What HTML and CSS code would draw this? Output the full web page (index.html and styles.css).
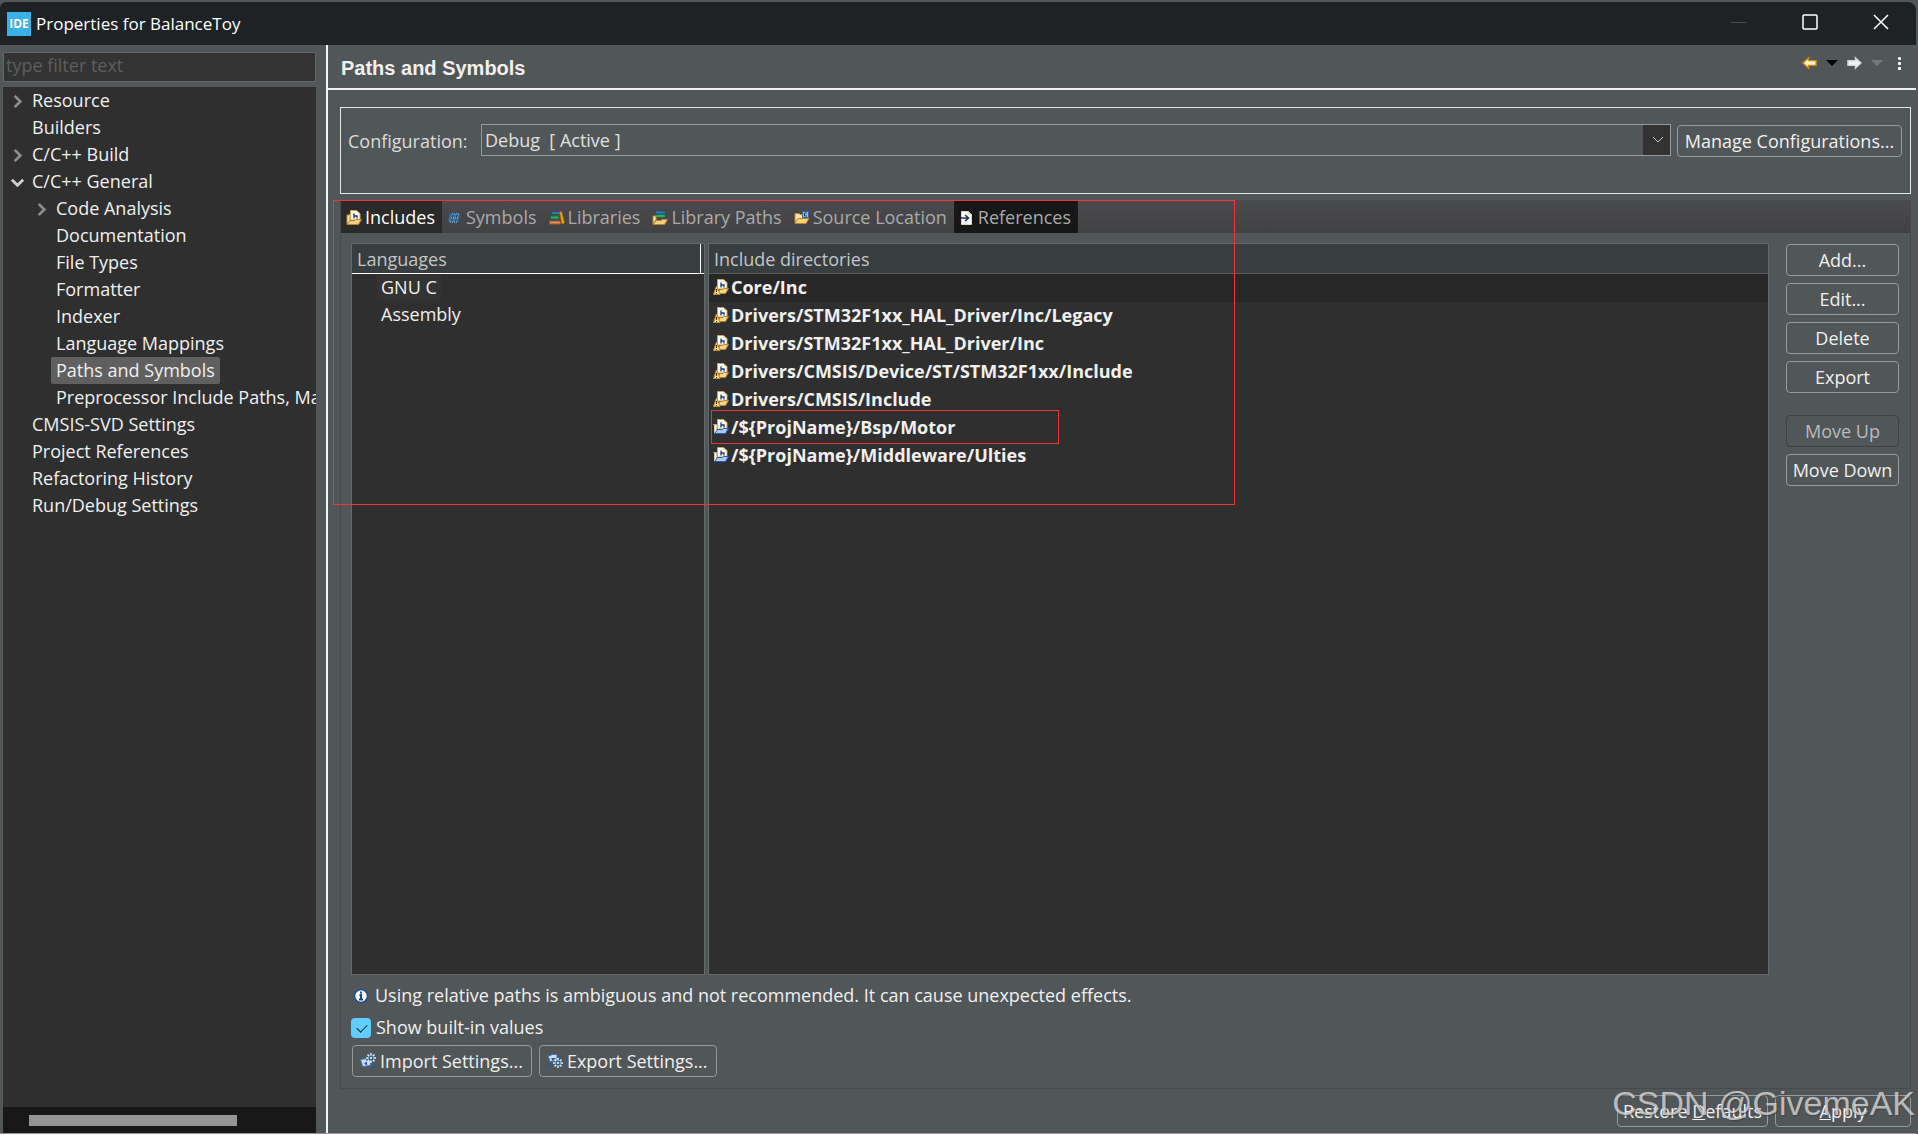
FILE: index.html
```html
<!DOCTYPE html>
<html lang="en">
<head>
  <meta charset="UTF-8" />
  <meta name="viewport" content="width=device-width, initial-scale=1.0"/>
  <title>Properties for BalanceToy</title>
  <link rel="stylesheet" href="styles.css">
</head>
<body>
  <svg class="defs" aria-hidden="true">
    <symbol id="chevron" viewBox="0 0 16 16"><path d="M5 2l6 6-6 6" fill="none" stroke="currentColor" stroke-width="3"/></symbol>
    <symbol id="header-page" viewBox="0 0 16 16">
      <path d="M4.500 10V.500h6l3.500 3V10z" fill="#fffaf0" stroke="#c9a55a"/>
      <path d="M8 3.500v5M8 6h3v2.500" fill="none" stroke="#1b3c6e" stroke-width="1.300"/>
    </symbol>
    <symbol id="folder-h" viewBox="0 0 16 16">
      <path d="M1 14V5h2l1-1v8z" fill="#fbe3a4" stroke="#b98a35"/>
      <use href="#header-page"/>
      <path d="M1 14.500l3-4h5l1-1h5.500l-3 5z" fill="#f7cf7f" stroke="#b9822c"/>
    </symbol>
    <symbol id="folder-warn" viewBox="0 0 16 16">
      <use href="#header-page"/>
      <path d="M5 14.500l2-4h3l1-1h4.500l-3 5z" fill="#f9d58c" stroke="#b9822c"/>
      <path d="M3.500 7l3.500 8.500H.500z" fill="#ffe08a" stroke="#d08a1c"/>
      <path d="M3.500 10v3M3.500 14v1" stroke="#4a2c00"/>
    </symbol>
    <symbol id="folder-blue" viewBox="0 0 16 16">
      <path d="M0 5.500h4" stroke="#8f9297"/>
      <path d="M1.500 6h2v7l-2 1z" fill="#fff" stroke="#e2d3ac"/>
      <use href="#header-page"/>
      <path d="M1.500 14.500l3-4h5l1-1h5l-3 5z" fill="#a9cbf7" stroke="#2f56b8"/>
    </symbol>
    <symbol id="hash" viewBox="0 0 16 16">
      <path d="M6.500 3L4 13M10.500 3L8 13M2.500 6h10M1.500 10h10" fill="none" stroke="#9cc9ee" stroke-width="2.600"/>
      <path d="M6.500 2.500L4 13.500M10.500 2.500L8 13.500M2 6h11M1 10h11" fill="none" stroke="#1f5a8c" stroke-width="1.400"/>
    </symbol>
    <symbol id="books" viewBox="0 0 16 16">
      <path d="M3 3h7" stroke="#1d7fc0" stroke-width="2"/>
      <path d="M1.500 6h8.500v3H1.500z" fill="#3aa76d" stroke="#176f46"/>
      <path d="M.500 11h11v3H.500z" fill="#e0915d" stroke="#a04f26"/>
      <path d="M10.500 2l2-.500L15.500 13l-2.500 1z" fill="#f4b51e" stroke="#a06c08"/>
    </symbol>
    <symbol id="book-folder" viewBox="0 0 16 16">
      <path d="M4 2.500h9" stroke="#1d7fc0" stroke-width="2"/>
      <path d="M4 4.500h9v3H4z" fill="#3aa76d" stroke="#176f46"/>
      <path d="M1 14V6h3v4z" fill="#fbe3a4" stroke="#b98a35"/>
      <path d="M1 14.500l3-4h5l1-1h5.500l-3 5z" fill="#f7cf7f" stroke="#b9822c"/>
    </symbol>
    <symbol id="source-folder" viewBox="0 0 16 16">
      <path d="M1 13V3.500h4l1 1h6V8" fill="#fbe3a4" stroke="#b98a35"/>
      <path d="M8.500 1.500h6v6h-6z" fill="#9db9e6" stroke="#3c5f9f"/>
      <path d="M13 3h-2.500v3H13" fill="none" stroke="#1b3c6e"/>
      <path d="M1 13.500l3-5h11l-3 5z" fill="#f7cf7f" stroke="#b9822c"/>
    </symbol>
    <symbol id="reference" viewBox="0 0 16 16">
      <path d="M2.500 1.500h7l3 3v10h-10z" fill="#fff" stroke="#d9d6c2"/>
      <path d="M9.500 1.500v3h3z" fill="#e6c36a"/>
      <path d="M2 8h7M6 5l3.500 3L6 11" fill="none" stroke="#23344f" stroke-width="1.600"/>
    </symbol>
    <symbol id="info" viewBox="0 0 16 16">
      <circle cx="8" cy="8" r="6.500" fill="#fff" stroke="#1c4f94" stroke-width="1.500"/>
      <path d="M8 3.500v2M6.500 7H8v4M6 11.500h4" fill="none" stroke="#12498f" stroke-width="2"/>
    </symbol>
    <symbol id="gear" viewBox="0 0 10 10">
      <path d="M5 0v10M0 5h10M1.500 1.500l7 7M8.500 1.500l-7 7" stroke="#dff0ff" stroke-width="1.500"/>
      <circle cx="5" cy="5" r="2.500" fill="#2c6294"/>
      <circle cx="5" cy="5" r="1" fill="#fff"/>
    </symbol>
    <symbol id="import" viewBox="0 0 16 16">
      <path d="M.500 6.500l6-1v2h4v5l-8 1z" fill="#c7dcf5" stroke="#4a72b4"/>
      <path d="M4 10.500l3-2v4z" fill="#2554a0"/>
      <use href="#gear" x="6" y="0" width="10" height="10"/>
      <path d="M15 11v4h-4z" fill="#1d5c9c"/>
    </symbol>
    <symbol id="export" viewBox="0 0 16 16">
      <path d="M1 2.500h3l1-1h4l1 1v5l-7 1z" fill="#c7dcf5" stroke="#4a72b4"/>
      <path d="M4 5h5L6 8z" fill="#2554a0"/>
      <use href="#gear" x="6" y="5" width="10" height="10"/>
      <path d="M0 11h4v4z" fill="#1d5c9c"/>
    </symbol>
    <symbol id="arrow-left" viewBox="0 0 16 14">
      <path d="M1 7l6-5.500v3h8v5H7v3z" fill="currentColor" stroke-width="1.500"/>
    </symbol>
    <symbol id="arrow-right" viewBox="0 0 16 14">
      <path d="M15 7L9 1.500v3H1v5h8v3z" fill="currentColor" stroke-width="1.500"/>
    </symbol>
  </svg>

  <div class="window">
    <header class="titlebar">
      <span class="app-icon">IDE</span>
      <span class="title">Properties for BalanceToy</span>
      <div class="window-buttons">
        <button aria-label="Minimize" disabled><svg viewBox="0 0 16 16"><path d="M0 8.500h15" stroke="#4b4f51"/></svg></button>
        <button aria-label="Maximize"><svg viewBox="0 0 16 16"><rect x="1" y="1" width="14" height="14" rx="1" fill="none" stroke="#fff" stroke-width="1.500"/></svg></button>
        <button aria-label="Close"><svg viewBox="0 0 16 16"><path d="M1 1l14 14M15 1L1 15" stroke="#fff" stroke-width="1.500"/></svg></button>
      </div>
    </header>

    <div class="content">
      <aside class="sidebar">
        <input class="filter" type="text" placeholder="type filter text" aria-label="Filter"/>
        <nav class="tree">
          <ul>
            <li><svg><use href="#chevron"/></svg><span>Resource</span></li>
            <li><span>Builders</span></li>
            <li><svg><use href="#chevron"/></svg><span>C/C++ Build</span></li>
            <li class="open"><svg><use href="#chevron"/></svg><span>C/C++ General</span>
              <ul>
                <li><svg><use href="#chevron"/></svg><span>Code Analysis</span></li>
                <li><span>Documentation</span></li>
                <li><span>File Types</span></li>
                <li><span>Formatter</span></li>
                <li><span>Indexer</span></li>
                <li><span>Language Mappings</span></li>
                <li><span class="selected">Paths and Symbols</span></li>
                <li><span>Preprocessor Include Paths, Macros etc.</span></li>
              </ul>
            </li>
            <li><span>CMSIS-SVD Settings</span></li>
            <li><span>Project References</span></li>
            <li><span>Refactoring History</span></li>
            <li><span>Run/Debug Settings</span></li>
          </ul>
        </nav>
        <div class="scrollbar"><div class="thumb"></div></div>
      </aside>

      <main class="page">
        <div class="page-head">
          <h1>Paths and Symbols</h1>
          <div class="history">
            <button class="back" aria-label="Back"><svg><use href="#arrow-left"/></svg></button>
            <button class="drop" aria-label="Back history"></button>
            <button class="forward" aria-label="Forward"><svg><use href="#arrow-right"/></svg></button>
            <button class="drop off" aria-label="Forward history"></button>
            <button class="more" aria-label="View menu"><i></i><i></i><i></i></button>
          </div>
        </div>

        <div class="page-body">
          <section class="config">
            <label for="configuration">Configuration:</label>
            <div class="combo">
              <select id="configuration"><option>Debug&nbsp; [ Active ]</option></select>
              <svg viewBox="0 0 12 12"><path d="M1 3l5 5 5-5" fill="none" stroke="#c8c8c8"/></svg>
            </div>
            <button class="btn">Manage Configurations...</button>
          </section>

          <section class="folder">
            <div class="tabs" role="tablist">
              <button class="tab active" role="tab"><svg><use href="#folder-h"/></svg>Includes</button>
              <button class="tab" role="tab"><svg><use href="#hash"/></svg>Symbols</button>
              <button class="tab" role="tab"><svg><use href="#books"/></svg>Libraries</button>
              <button class="tab" role="tab"><svg><use href="#book-folder"/></svg>Library Paths</button>
              <button class="tab" role="tab"><svg><use href="#source-folder"/></svg>Source Location</button>
              <button class="tab hover" role="tab"><svg><use href="#reference"/></svg>References</button>
            </div>

            <div class="tab-body">
              <div class="panes">
                <div class="pane languages">
                  <table>
                    <thead><tr><th>Languages</th></tr></thead>
                    <tbody>
                      <tr><td><span class="focus">GNU C</span></td></tr>
                      <tr><td><span>Assembly</span></td></tr>
                    </tbody>
                  </table>
                </div>
                <div class="pane dirs">
                  <table>
                    <thead><tr><th>Include directories</th></tr></thead>
                    <tbody>
                      <tr class="current"><td><svg><use href="#folder-warn"/></svg>Core/Inc</td></tr>
                      <tr><td><svg><use href="#folder-warn"/></svg>Drivers/STM32F1xx_HAL_Driver/Inc/Legacy</td></tr>
                      <tr><td><svg><use href="#folder-warn"/></svg>Drivers/STM32F1xx_HAL_Driver/Inc</td></tr>
                      <tr><td><svg><use href="#folder-warn"/></svg>Drivers/CMSIS/Device/ST/STM32F1xx/Include</td></tr>
                      <tr><td><svg><use href="#folder-warn"/></svg>Drivers/CMSIS/Include</td></tr>
                      <tr class="marked"><td><svg><use href="#folder-blue"/></svg>/${ProjName}/Bsp/Motor</td></tr>
                      <tr><td><svg><use href="#folder-blue"/></svg>/${ProjName}/Middleware/Ulties</td></tr>
                    </tbody>
                  </table>
                </div>
                <div class="actions">
                  <button class="btn">Add...</button>
                  <button class="btn">Edit...</button>
                  <button class="btn">Delete</button>
                  <button class="btn">Export</button>
                  <button class="btn move" disabled>Move Up</button>
                  <button class="btn">Move Down</button>
                </div>
              </div>

              <p class="note"><svg><use href="#info"/></svg>Using relative paths is ambiguous and not recommended. It can cause unexpected effects.</p>
              <label class="check"><input type="checkbox" checked/>Show built-in values</label>
              <div class="settings">
                <button class="btn"><svg><use href="#import"/></svg>Import Settings...</button>
                <button class="btn"><svg><use href="#export"/></svg>Export Settings...</button>
              </div>
            </div>
            <div class="outline"></div>
          </section>

          <div class="footer">
            <button class="btn">Restore <u>D</u>efaults</button>
            <button class="btn apply"><u>A</u>pply</button>
            <span class="watermark">CSDN @GivemeAK</span>
          </div>
        </div>
      </main>
    </div>
  </div>
</body>
</html>
```

FILE: styles.css
```css
* {
  box-sizing: border-box;
}
body {
  margin: 0;
  background: #515658;
  color: #f0f0f0;
  font-family: "Open Sans", "Noto Sans", sans-serif;
  font-size: 18px;
  line-height: 27px;
}
button, input, select {
  font: inherit;
  color: inherit;
}
svg {
  width: 16px;
  height: 16px;
  flex: none;
}
.defs {
  position: absolute;
  width: 0;
  height: 0;
}
.window {
  display: flex;
  flex-direction: column;
  height: 100vh;
  padding: 2px 2px 0 0;
  border-bottom: 1px solid #fff;
  overflow: hidden;
}

/* title bar */
.titlebar {
  display: flex;
  align-items: center;
  flex: none;
  height: 43px;
  padding-left: 7px;
  background: #1e2224;
  border-radius: 6px 8px 0 0;
}
.app-icon {
  width: 24px;
  height: 24px;
  background: #3bb1e5;
  color: #fff;
  font: bold 12px/24px "Open Sans", sans-serif;
  text-align: center;
}
.title {
  margin-left: 5px;
  font-size: 17px;
  line-height: 24px;
  color: #fff;
}
.window-buttons {
  display: flex;
  margin-left: auto;
}
.window-buttons button {
  width: 71px;
  height: 43px;
  padding: 0;
  background: none;
  border: none;
}

.content {
  display: flex;
  flex: 1;
  min-height: 0;
  border-bottom: 1px solid #999;
}

/* left tree */
.sidebar {
  display: flex;
  flex-direction: column;
  flex: none;
  width: 316px;
  padding: 7px 0 0 3px;
}
.filter {
  height: 30px;
  margin-bottom: 5px;
  padding: 0 2px 4px;
  background: #333;
  border: 1px solid #666;
  outline: none;
}
.filter::placeholder {
  color: #5e5e5e;
  opacity: 1;
}
.tree {
  flex: 1;
  background: #2f2f2f;
  overflow: hidden;
  white-space: nowrap;
}
.tree ul {
  margin: 0;
  padding-left: 24px;
  list-style: none;
}
.tree li {
  position: relative;
}
.tree li > span {
  display: inline-block;
  height: 27px;
  padding: 0 5px;
  vertical-align: top;
}
.tree svg {
  position: absolute;
  left: -17px;
  top: 7px;
  width: 15px;
  height: 15px;
  color: #8c8c8c;
}
.tree .open > svg {
  color: #d0d0d0;
  transform: rotate(90deg);
}
.tree .selected {
  background: #606060;
  border-radius: 2px;
}
.scrollbar {
  height: 26px;
  padding: 8px 0 0 26px;
  background: #181818;
}
.thumb {
  width: 208px;
  height: 11px;
  background: #959595;
}

/* right page */
.page {
  display: flex;
  flex-direction: column;
  flex: 1;
  min-width: 0;
  margin-left: 10px;
  border-left: 2px solid #f4f4f4;
}
.page-head {
  display: flex;
  justify-content: space-between;
  height: 45px;
  padding: 0 15px 0 13px;
  border-bottom: 2px solid #eee;
}
h1 {
  margin: 0;
  font: bold 20px/46px "Liberation Sans", sans-serif;
}
.history {
  display: flex;
  align-items: center;
  gap: 9px;
  height: 36px;
}
.history button {
  display: flex;
  padding: 0;
  background: none;
  border: none;
}
.history svg {
  width: 15px;
  height: 14px;
}
.history .back {
  color: #fff3c4;
  stroke: #c98a1b;
}
.history .forward {
  color: #f2f2f2;
  stroke: #d5d5d5;
}
.history .drop {
  border: solid transparent;
  border-width: 6px 6px 0;
  border-top-color: #000;
}
.history .off {
  border-top-color: #76797b;
}
.history .more {
  flex-direction: column;
  gap: 2px;
  margin-left: 6px;
}
.more i {
  width: 3px;
  height: 3px;
  background: #fff;
  border-radius: 1px;
}
.page-body {
  display: flex;
  flex-direction: column;
  flex: 1;
  min-height: 0;
  padding: 17px 5px 6px 12px;
}
.config {
  display: flex;
  gap: 6px;
  height: 87px;
  margin-bottom: 6px;
  padding: 16px 8px 0 7px;
  border: 1px solid #e6e6e6;
}
.config label {
  width: 127px;
  line-height: 34px;
  color: #dcdcdc;
}
.combo {
  position: relative;
  flex: 1;
}
.combo select {
  width: 100%;
  height: 32px;
  padding: 0 3px;
  appearance: none;
  border: 1px solid #999;
  border-radius: 0;
  background: linear-gradient(#333, #333) right / 27px 100% no-repeat #515658;
  color: #e0e0e0;
  outline: none;
}
.combo svg {
  position: absolute;
  right: 7px;
  top: 10px;
  width: 12px;
  height: 12px;
}
.btn {
  height: 32px;
  padding: 0 5px;
  background: none;
  border: 1px solid #999;
  border-radius: 4px;
  line-height: 28px;
  white-space: nowrap;
}
.btn:disabled {
  border-color: #3e4042;
  color: #b9bbbc;
}
.config .btn {
  width: 225px;
  margin-top: 1px;
}

/* tab folder */
.folder {
  position: relative;
  display: flex;
  flex-direction: column;
  flex: 1;
  min-height: 0;
  border: solid #48494c;
  border-width: 0 1px 1px;
}
.tabs {
  display: flex;
  flex: none;
  height: 33px;
  background: linear-gradient(#4a4b4f, #424143);
}
.tab {
  display: flex;
  align-items: center;
  gap: 3px;
  padding: 2px 7px 0 5px;
  border: none;
  background: none;
  color: #aaa;
}
.tab.active {
  background: #2a2a2a;
  color: #fff;
}
.tab.hover {
  background: #171717;
}
.tab-body {
  display: flex;
  flex-direction: column;
  flex: 1;
  min-height: 0;
  padding: 10px 11px 11px 10px;
}
.panes {
  display: flex;
  flex: 1;
  min-height: 0;
}
.pane {
  background: #2f2f2f;
  border: 1px solid #66696a;
}
.languages {
  flex: none;
  width: 354px;
  margin-right: 3px;
}
.dirs {
  flex: 1;
  min-width: 0;
}
.pane table {
  width: 100%;
  border-spacing: 0;
}
.pane th {
  height: 30px;
  padding: 0 5px;
  background: #383d3f;
  border-bottom: 1px solid #5a5d5e;
  color: #c3c6c7;
  font-weight: normal;
  line-height: 28px;
  text-align: left;
}
.languages th {
  position: relative;
  border-bottom-color: #fff;
}
.languages th::after {
  content: "";
  position: absolute;
  right: 3px;
  top: 0;
  bottom: 0;
  border-right: 1px solid #fff;
}
.languages td {
  height: 27px;
  padding: 0 0 0 25px;
}
.languages td span {
  display: block;
  width: max-content;
  padding: 0 4px;
}
.focus {
  background: #333;
}
.dirs td {
  display: flex;
  align-items: center;
  gap: 2px;
  height: 28px;
  padding: 0 4px 2px;
  font-weight: bold;
}
.dirs .current td {
  background: #272727;
}
.marked td {
  position: relative;
}
.marked td::after {
  content: "";
  position: absolute;
  left: 2px;
  top: -4px;
  width: 346px;
  height: 32px;
  border: 1px solid #f03535;
}
.outline {
  position: absolute;
  left: -8px;
  top: 0;
  width: 902px;
  height: 305px;
  border: 1px solid #f03535;
  pointer-events: none;
}
.actions {
  display: flex;
  flex-direction: column;
  flex: none;
  gap: 7px;
  width: 113px;
  margin: 1px 0 0 17px;
}
.actions .btn {
  padding: 0;
}
.actions .move {
  margin-top: 15px;
}
.note {
  display: flex;
  align-items: center;
  gap: 6px;
  margin: 7px 0 5px 2px;
}
.check {
  display: flex;
  align-items: center;
  gap: 5px;
  width: max-content;
  margin-bottom: 4px;
}
.check input {
  width: 20px;
  height: 20px;
  margin: 0;
  appearance: none;
  border-radius: 4px;
  background: #60cdff;
}
.check input:checked::after {
  content: "";
  display: block;
  width: 9px;
  height: 5px;
  margin: 6px 0 0 6px;
  border: solid #1b2b33;
  border-width: 0 0 1px 1px;
  transform: rotate(-45deg);
}
.settings {
  display: flex;
  gap: 7px;
  margin-left: 1px;
}
.settings .btn {
  display: flex;
  align-items: center;
  gap: 4px;
  padding: 0 8px 0 7px;
}

/* bottom buttons */
.footer {
  position: relative;
  display: flex;
  justify-content: flex-end;
  gap: 7px;
  flex: none;
  margin-top: 6px;
}
.footer .apply {
  width: 136px;
}
.watermark {
  position: absolute;
  right: -4px;
  bottom: 4px;
  color: rgba(225, 225, 225, 0.75);
  font: 34px/40px "Liberation Sans", sans-serif;
  text-shadow: 1px 1px 1px #3338;
  white-space: nowrap;
}
```
